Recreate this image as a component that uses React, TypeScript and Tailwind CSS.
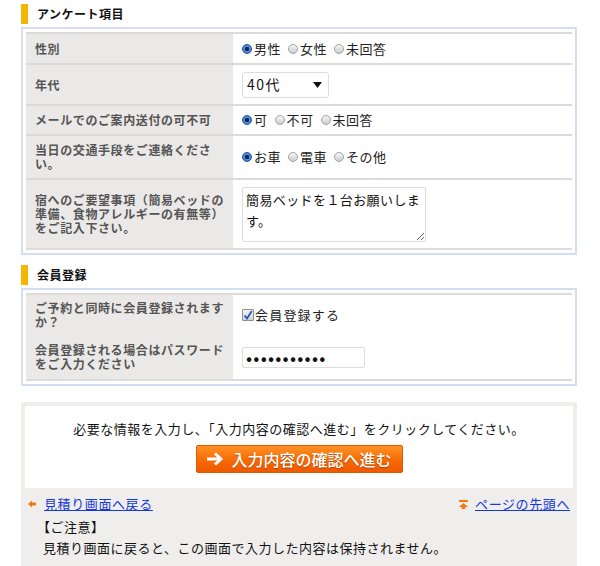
const font = { fontFamily: '"Noto Sans CJK JP", "Noto Sans", sans-serif' }

function Radio({ checked, label }: { checked?: boolean; label: string }) {
  return (
    <span className="inline-flex items-center mr-[7px]">
      <span
        className={
          checked
            ? 'w-[10px] h-[10px] rounded-full border border-[#1d4f9c] bg-[radial-gradient(circle,#0b2652_0_2px,#5b9ae6_2.6px,#2a62bf_100%)]'
            : 'w-[10px] h-[10px] rounded-full border border-[#a3a3a3] bg-[linear-gradient(#f6f6f6,#cccccc)]'
        }
      />
      <span className="ml-[2px]">{label}</span>
    </span>
  )
}

function Heading({ title }: { title: string }) {
  return (
    <div className="flex items-center h-[20px]">
      <span className="w-[7px] h-[20px] bg-[#f6b500]" />
      <span className="ml-[9px] text-[12px] font-bold tracking-[0.5px] text-[#111]">{title}</span>
    </div>
  )
}

function Row({
  label,
  h,
  children,
  top = true,
}: {
  label: React.ReactNode
  h: string
  children: React.ReactNode
  top?: boolean
}) {
  return (
    <div className={`flex ${h} ${top ? 'border-t-2 border-[#dddbd9]' : ''}`}>
      <div className="w-[207px] shrink-0 bg-[#ebe9e7] pl-[9px] pr-[3px] flex items-center text-[12px] leading-[14px] font-bold tracking-[0.6px] text-[#555]">
        {label}
      </div>
      <div className="flex-1 bg-white pl-[9px] flex items-center text-[13px] tracking-[0.5px] text-[#222]">
        {children}
      </div>
    </div>
  )
}

export default function App() {
  return (
    <div className="w-[600px] h-[566px] bg-white overflow-hidden" style={font}>
      <div className="ml-[21px] w-[556px] pt-[4px]">
        <Heading title="アンケート項目" />
        <div className="mt-[3px] border-2 border-[#d3def4] p-[3px]">
          <div className="border-b-2 border-[#dddbd9]">
            <Row label="性別" h="h-[31px]">
              <Radio checked label="男性" />
              <Radio label="女性" />
              <Radio label="未回答" />
            </Row>
            <Row label="年代" h="h-[41px]">
              <div className="w-[87px] h-[26px] border border-[#dcdcdc] rounded-[3px] bg-white flex items-center justify-between pl-[4px] pr-[6px]">
                <span className="text-[14px] tracking-[1.5px] text-[#111]">40代</span>
                <svg width="9" height="6" viewBox="0 0 9 6">
                  <path d="M0 0h9L4.5 6z" fill="#111" />
                </svg>
              </div>
            </Row>
            <Row label="メールでのご案内送付の可不可" h="h-[30px]">
              <Radio checked label="可" />
              <Radio label="不可" />
              <Radio label="未回答" />
            </Row>
            <Row label="当日の交通手段をご連絡ください。" h="h-[44px]">
              <Radio checked label="お車" />
              <Radio label="電車" />
              <Radio label="その他" />
            </Row>
            <Row label="宿へのご要望事項（簡易ベッドの準備、食物アレルギーの有無等）をご記入下さい。" h="h-[70px]">
              <textarea
                readOnly
                defaultValue="簡易ベッドを１台お願いします。"
                className="w-[184px] h-[55px] border border-[#dcdcdc] rounded-[2px] px-[3px] py-[1px] text-[13px] leading-[21px] tracking-[0.4px] text-[#111] outline-none"
                style={font}
              />
            </Row>
          </div>
        </div>

        <div className="mt-[10px]">
          <Heading title="会員登録" />
        </div>
        <div className="mt-[3px] border-2 border-[#d3def4] p-[3px]">
          <div className="border-t-2 border-b-2 border-[#dddbd9]">
            <Row label="ご予約と同時に会員登録されますか？" h="h-[40px]" top={false}>
              <span className="inline-flex items-center">
                <span className="w-[12px] h-[12px] border border-[#8f8f8f] rounded-[1px] bg-[linear-gradient(#f4f4f4,#d4d4d4)] flex items-center justify-center">
                  <svg width="10" height="10" viewBox="0 0 10 10">
                    <path d="M1.5 5.5 4 8.5 8.8 1" fill="none" stroke="#1f55c8" strokeWidth="1.8" />
                  </svg>
                </span>
                <span className="ml-[1px] tracking-[1.2px]">会員登録する</span>
              </span>
            </Row>
            <Row label="会員登録される場合はパスワードをご入力ください" h="h-[44px]" top={false}>
              <input
                type="password"
                readOnly
                value="abcdefghijk"
                className="w-[123px] h-[21px] border border-[#dcdcdc] rounded-[2px] px-[3px] text-[18px] leading-none tracking-[1.2px] text-[#111] outline-none"
              />
            </Row>
          </div>
        </div>

        <div className="mt-[16px] bg-[#efeeed] p-[4px] pb-[24px]">
          <div className="bg-white pt-[14px] pb-[15px] flex flex-col items-center">
            <p className="text-[13px] leading-[18px] tracking-[0.5px] text-[#111]">
              必要な情報を入力し、「入力内容の確認へ進む」をクリックしてください。
            </p>
            <button className="mt-[7px] w-[207px] h-[28px] rounded-[2px] border border-[#e05a00] bg-[linear-gradient(#ff9226,#f66a05_55%,#ef5800)] flex items-center justify-center text-white text-[16px] font-medium leading-none [text-shadow:0_1px_1px_rgba(120,40,0,0.5)]">
              <svg width="18" height="16" viewBox="0 0 18 16" className="mr-[7px]">
                <path d="M1 8h13M9 2.5 15 8l-6 5.5" fill="none" stroke="#fff" strokeWidth="3" />
              </svg>
              入力内容の確認へ進む
            </button>
          </div>
          <div className="mt-[7px] flex justify-between items-center px-[3px] text-[13px] leading-[18px] tracking-[0.6px]">
            <a className="flex items-center text-[#1538d8] underline">
              <svg width="8" height="8" viewBox="0 0 8 8" className="mr-[8px]">
                <path d="M0 4 4 0.5v2h4v3H4v2z" fill="#f27a10" />
              </svg>
              見積り画面へ戻る
            </a>
            <a className="flex items-center text-[#1538d8] underline">
              <svg width="9" height="9" viewBox="0 0 9 9" className="mr-[7px]">
                <path d="M0 0h9v2H0zM4.5 3 9 7H6.3v2H2.7V7H0z" fill="#f27a10" />
              </svg>
              ページの先頭へ
            </a>
          </div>
          <div className="mt-[3px] pl-[18px] text-[13px] leading-[21px] tracking-[0.5px] text-[#111]">
            <p className="-ml-[6px]">【ご注意】</p>
            <p>見積り画面に戻ると、この画面で入力した内容は保持されません。</p>
          </div>
        </div>
      </div>
    </div>
  )
}
